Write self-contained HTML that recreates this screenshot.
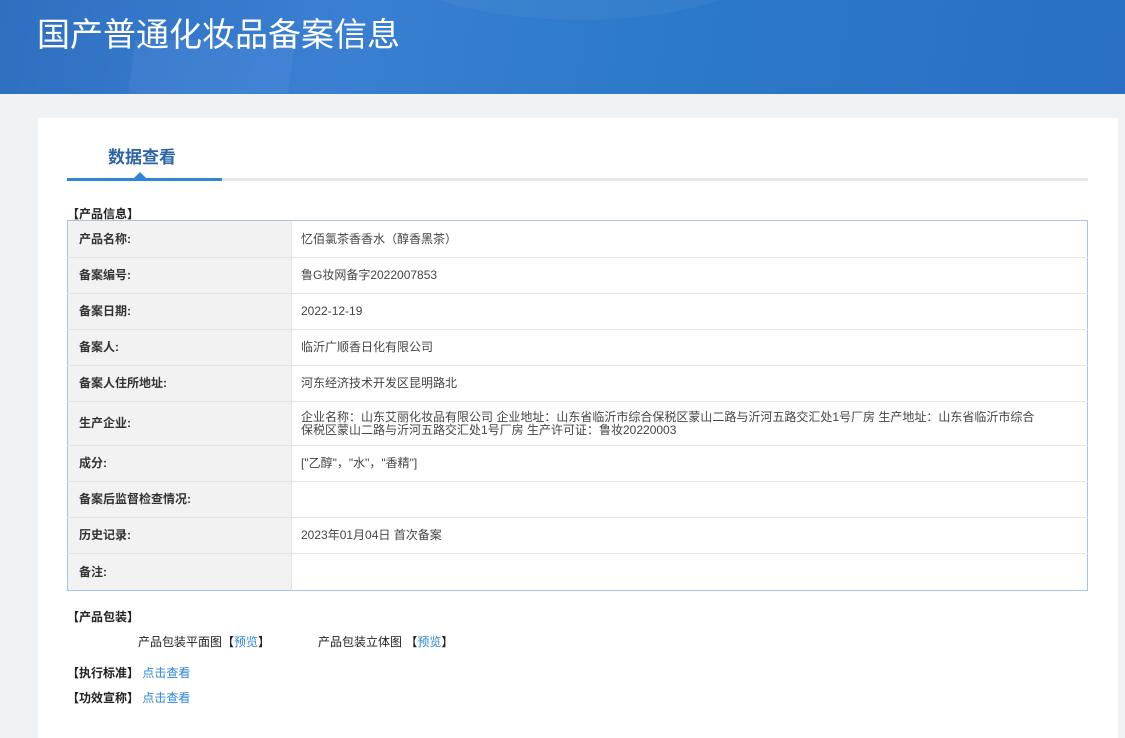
<!DOCTYPE html>
<html><head><meta charset="utf-8"><style>
*{margin:0;padding:0;box-sizing:border-box}
body{width:1125px;height:728px;overflow:hidden;background:#eff3f6;font-family:"Liberation Sans","Noto Sans CJK SC",sans-serif;font-size:12px;color:#333;position:relative}
.hd{position:absolute;left:0;top:0;width:1125px;height:94px;background:linear-gradient(100deg,#2f6fc0 0%,#3a7fd2 30%,#2c79c9 60%,#2a6fc4 100%);overflow:hidden}
.hd .s1{position:absolute;left:130px;top:40px;width:160px;height:80px;background:rgba(120,170,240,.15);transform:skew(-8deg)}
.hd .s2{position:absolute;left:380px;top:-120px;width:400px;height:140px;border-radius:50%;background:rgba(255,255,255,.04)}
.hd h1{position:absolute;left:37px;top:8px;font-size:33px;font-weight:normal;color:#fff}
.panel{position:absolute;left:38px;top:118px;width:1080px;height:620px;background:#fff}
.tab{position:absolute;left:108px;top:143px;font-size:17px;font-weight:bold;color:#2a64a4}
.line{position:absolute;left:67px;top:178px;width:1021px;height:3px;background:#e6e8eb}
.line b{position:absolute;left:0;top:0;width:155px;height:3px;background:#2e86d8}
.tri{position:absolute;left:134px;top:172px;width:0;height:0;border-left:6px solid transparent;border-right:6px solid transparent;border-bottom:6px solid #2e86d8}
.t{position:absolute;font-weight:bold;color:#222;font-size:12px}
table{position:absolute;left:67px;top:220px;width:1021px;border-collapse:collapse;border:1px solid #a9c3e5}
td{border-top:1px solid #e4e4e4;height:36px;vertical-align:middle;font-size:12px;line-height:13px}
td.l{width:224px;background:#f2f2f2;font-weight:bold;color:#333;padding-left:11px;border-right:1px solid #e4e4e4}
td.v{padding-left:9px;color:#444}
a{color:#2b86d4;text-decoration:none}
.p{position:absolute;font-size:12px;color:#222}
</style></head><body>
<div class="hd"><div class="s1"></div><div class="s2"></div><h1>国产普通化妆品备案信息</h1></div>
<div class="panel"></div>
<div class="tab">数据查看</div>
<div class="line"><b></b></div>
<div class="tri"></div>
<div class="t" style="left:67px;top:205px">【产品信息】</div>
<table>
<tr><td class="l" style="border-top:none;height:37px">产品名称:</td><td class="v" style="border-top:none">忆佰氯茶香香水（醇香黑茶）</td></tr>
<tr><td class="l">备案编号:</td><td class="v">鲁G妆网备字2022007853</td></tr>
<tr><td class="l">备案日期:</td><td class="v">2022-12-19</td></tr>
<tr><td class="l">备案人:</td><td class="v">临沂广顺香日化有限公司</td></tr>
<tr><td class="l">备案人住所地址:</td><td class="v">河东经济技术开发区昆明路北</td></tr>
<tr><td class="l" style="height:44px">生产企业:</td><td class="v" style="height:44px">企业名称：山东艾丽化妆品有限公司 企业地址：山东省临沂市综合保税区蒙山二路与沂河五路交汇处1号厂房 生产地址：山东省临沂市综合<br>保税区蒙山二路与沂河五路交汇处1号厂房 生产许可证：鲁妆20220003</td></tr>
<tr><td class="l">成分:</td><td class="v">["乙醇"，"水"，"香精"]</td></tr>
<tr><td class="l">备案后监督检查情况:</td><td class="v"></td></tr>
<tr><td class="l">历史记录:</td><td class="v">2023年01月04日 首次备案</td></tr>
<tr><td class="l" style="height:37px">备注:</td><td class="v"></td></tr>
</table>
<div class="t" style="left:67px;top:608px">【产品包装】</div>
<div class="p" style="left:138px;top:633px">产品包装平面图【<a>预览</a>】</div>
<div class="p" style="left:318px;top:633px">产品包装立体图 【<a>预览</a>】</div>
<div class="t" style="left:67px;top:664px">【执行标准】 <a style="font-weight:normal">点击查看</a></div>
<div class="t" style="left:67px;top:689px">【功效宣称】 <a style="font-weight:normal">点击查看</a></div>
</body></html>
